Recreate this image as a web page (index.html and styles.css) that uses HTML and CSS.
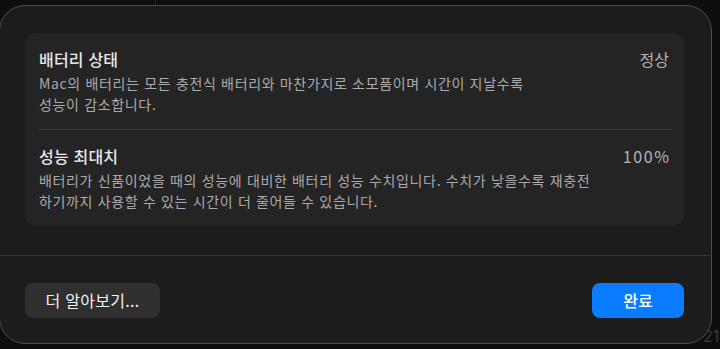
FILE: index.html
```html
<!DOCTYPE html>
<html lang="ko">
<head>
<meta charset="utf-8">
<title>배터리 상태</title>
<link rel="stylesheet" href="styles.css">
</head>
<body>
<div class="backdrop">
  <span class="bg-tick"></span>
  <span class="bg-num">21</span>
</div>
<div class="dialog">
  <div class="content">
    <div class="card">
      <div class="row">
        <div class="text">
          <div class="title">배터리 상태</div>
          <div class="desc">Mac의 배터리는 모든 충전식 배터리와 마찬가지로 소모품이며 시간이 지날수록<br>성능이 감소합니다.</div>
        </div>
        <div class="value">정상</div>
      </div>
      <div class="row">
        <div class="text">
          <div class="title">성능 최대치</div>
          <div class="desc">배터리가 신품이었을 때의 성능에 대비한 배터리 성능 수치입니다. 수치가 낮을수록 재충전<br>하기까지 사용할 수 있는 시간이 더 줄어들 수 있습니다.</div>
        </div>
        <div class="value value-num">100%</div>
      </div>
    </div>
  </div>
  <div class="footer">
    <button class="btn btn-secondary">더 알아보기...</button>
    <button class="btn btn-primary">완료</button>
  </div>
</div>
</body>
</html>
```
FILE: styles.css
```css
html, body {
  margin: 0;
  padding: 0;
}
body {
  width: 720px;
  height: 349px;
  overflow: hidden;
  background: #0e0e0e;
  font-family: "Noto Sans CJK KR", "Noto Sans", sans-serif;
  position: relative;
}
.backdrop .bg-tick {
  position: absolute;
  left: 155px;
  top: 0;
  width: 1px;
  height: 5px;
  background: #2a2a2a;
}
.backdrop .bg-num {
  position: absolute;
  left: 703px;
  top: 326px;
  font-size: 16px;
  color: #3a3a3a;
  font-family: "Inter", sans-serif;
}
.dialog {
  position: relative;
  margin: 5px 0 0 -1px;
  width: 713px;
  height: 339px;
  box-sizing: border-box;
  border: 1px solid #4c4c4c;
  border-radius: 26px;
  background: #1c1c1c;
  display: flex;
  flex-direction: column;
}
.content {
  padding: 27px 27px 29px 25px;
  border-bottom: 1px solid #363636;
}
.card {
  background: #242424;
  border-radius: 11px;
  padding: 0 12px 0 14px;
}
.row {
  display: flex;
  justify-content: space-between;
  align-items: flex-start;
  padding: 16px 0 15px;
}
.row + .row {
  border-top: 1px solid #363636;
}
.title {
  font-size: 16px;
  line-height: 20px;
  font-weight: 500;
  color: #e8e8e8;
  letter-spacing: 0.2px;
}
.desc {
  margin-top: 4px;
  font-size: 14px;
  line-height: 20.5px;
  letter-spacing: 0.66px;
  color: #ababab;
}
.value {
  font-size: 16px;
  line-height: 20px;
  color: #b4b4b4;
  padding-right: 3px;
  white-space: nowrap;
}
.value-num {
  letter-spacing: 1.6px;
  padding-right: 1.5px;
}
.footer {
  flex: 1;
  display: flex;
  justify-content: space-between;
  align-items: center;
  padding: 1px 27px 0 25px;
}
.btn {
  height: 35px;
  border: none;
  border-radius: 8px;
  font-family: "Noto Sans CJK KR", "Noto Sans", sans-serif;
  font-size: 16px;
  color: #f2f2f2;
  padding: 0;
  cursor: default;
}
.btn-secondary {
  width: 135px;
  background: #2f2f2f;
  letter-spacing: 0.3px;
}
.btn-primary {
  width: 92px;
  background: #0a7cff;
  color: #ffffff;
  font-weight: 500;
}
```
